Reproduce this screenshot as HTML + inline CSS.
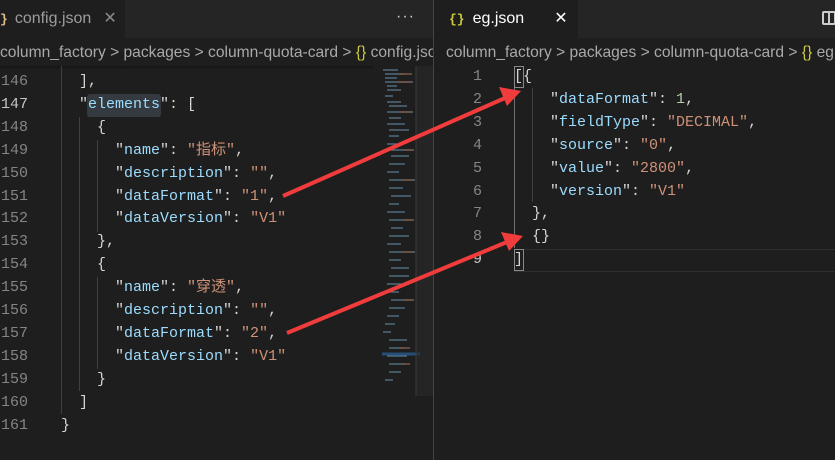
<!DOCTYPE html>
<html><head><meta charset="utf-8"><style>
*{margin:0;padding:0;box-sizing:border-box}
body{width:835px;height:460px;background:#1e1e1e;overflow:hidden;position:relative;font-family:"Liberation Sans",sans-serif}
.abs{position:absolute}
.mono{font-family:"Liberation Mono","Noto Sans CJK SC",monospace;font-size:15px;white-space:pre;line-height:22.9px}
.k{color:#9cdcfe}.s{color:#ce9178}.n{color:#b5cea8}.p{color:#d4d4d4}
.ln{color:#858585;text-align:right;width:40px}
.tab{font-size:16px;color:#fff;height:38px;line-height:38px}
.bc{font-size:15.6px;color:#a9a9a9;height:28px;line-height:28px;white-space:nowrap}
.y{color:#e2c08d;font-family:"Liberation Mono",monospace;font-weight:bold;font-size:13px}
</style></head><body>
<div class="abs" style="left:0;top:0;width:433px;height:38px;background:#252526"></div>
<div class="abs" style="left:0;top:0;width:125px;height:38px;background:#1e1e1e"></div>
<div class="abs tab" style="left:0;top:0;width:125px;"><span class="y">}</span><span style="margin-left:7px;color:#9d9d9d">config.json</span><span style="margin-left:12px;color:#8a8a8a;font-size:16px">✕</span></div>
<div class="abs" style="left:396px;top:8px;color:#ccc;font-size:16px;letter-spacing:1px">···</div>
<div class="abs" style="left:433px;top:0;width:1px;height:460px;background:#444"></div>
<div class="abs" style="left:434px;top:0;width:401px;height:38px;background:#252526"></div>
<div class="abs" style="left:434px;top:0;width:144px;height:38px;background:#1e1e1e"></div>
<div class="abs tab" style="left:449px;top:0"><span class="y" style="color:#cbcb41">{}</span><span style="margin-left:8px">eg.json</span><span style="margin-left:30px;font-size:16px">✕</span></div>
<div class="abs" style="left:822px;top:11px;width:14px;height:14px;border:2px solid #ccc;border-radius:2px"></div>
<div class="abs" style="left:828px;top:11px;width:2px;height:14px;background:#ccc"></div>
<div class="abs bc" style="left:0;top:39px;width:433px;overflow:hidden">column_factory &gt; packages &gt; column-quota-card &gt; <span style="color:#cbcb41">{}</span> config.json</div>
<div class="abs bc" style="left:446px;top:39px;width:389px;overflow:hidden">column_factory &gt; packages &gt; column-quota-card &gt; <span style="color:#cbcb41">{}</span> eg.json</div>
<div class="abs" style="left:0;top:66px;width:373px;height:4px;background:linear-gradient(#151515,#1e1e1e)"></div>
<div class="abs mono ln" style="left:-12px;top:71px">146
<span style="color:#c6c6c6">147</span>
148
149
150
151
152
153
154
155
156
157
158
159
160
161</div>
<div class="abs" style="left:61px;top:66px;width:1px;height:348px;background:#404040"></div>
<div class="abs" style="left:79px;top:117px;width:1px;height:274px;background:#404040"></div>
<div class="abs" style="left:97px;top:140px;width:1px;height:92px;background:#404040"></div>
<div class="abs" style="left:97px;top:277px;width:1px;height:92px;background:#404040"></div>
<div class="abs" style="left:87px;top:94px;width:74px;height:23px;background:#343a40;border-radius:3px"></div>
<div class="abs mono" style="left:61px;top:71px"><span class="p">  ],</span>
<span class="p">  "</span><span class="k">elements</span><span class="p">": [</span>
<span class="p">    {</span>
<span class="p">      "</span><span class="k">name</span><span class="p">": </span><span class="s">"指标"</span><span class="p">,</span>
<span class="p">      "</span><span class="k">description</span><span class="p">": </span><span class="s">""</span><span class="p">,</span>
<span class="p">      "</span><span class="k">dataFormat</span><span class="p">": </span><span class="s">"1"</span><span class="p">,</span>
<span class="p">      "</span><span class="k">dataVersion</span><span class="p">": </span><span class="s">"V1"</span>
<span class="p">    },</span>
<span class="p">    {</span>
<span class="p">      "</span><span class="k">name</span><span class="p">": </span><span class="s">"穿透"</span><span class="p">,</span>
<span class="p">      "</span><span class="k">description</span><span class="p">": </span><span class="s">""</span><span class="p">,</span>
<span class="p">      "</span><span class="k">dataFormat</span><span class="p">": </span><span class="s">"2"</span><span class="p">,</span>
<span class="p">      "</span><span class="k">dataVersion</span><span class="p">": </span><span class="s">"V1"</span>
<span class="p">    }</span>
<span class="p">  ]</span>
<span class="p">}</span></div>
<svg class="abs" style="left:380px;top:66px" width="53" height="330">
<g stroke-width="1.2">
<path d="M3 4h15M5 8h20M5 12h12M5 16h28M7 20h10M7 24h14M5 30h8M7 36h14M9 40h18M7 46h26M9 52h12M7 58h18M9 64h20M9 70h10M7 78h14M9 84h24M11 90h18M9 98h16M7 106h12M9 114h26M9 122h14M11 130h20M9 138h10M7 146h18M9 154h24M11 162h12M9 170h20M7 178h14M9 186h26M9 194h12M11 202h18M9 210h20M7 218h14M9 226h10M11 234h22M9 242h16M7 250h12M5 258h10M3 266h8M9 274h18M9 282h14M7 290h20M9 298h16M9 306h12M5 314h8" stroke="#5a7a8f"/>
<path d="M20 8h12M18 16h14M20 46h12M24 84h10M22 114h12M24 154h10M22 186h12M24 234h10M20 282h10M22 298h8" stroke="#8a6550"/>
<path d="M2 288h38" stroke="#264f78" stroke-width="3"/>
</g>
<rect x="36" y="0" width="17" height="330" fill="#2a2a2a" opacity="0.6"/>
<line x1="36" y1="0" x2="36" y2="330" stroke="#3a3a3a"/>
</svg>
<div class="abs mono ln" style="left:442px;top:66px">1
2
3
4
5
6
7
8
<span style="color:#c6c6c6">9</span></div>
<div class="abs" style="left:514px;top:88px;width:1px;height:160px;background:#707070"></div>
<div class="abs" style="left:532px;top:88px;width:1px;height:114px;background:#404040"></div>
<div class="abs" style="left:514px;top:249px;width:321px;height:23px;border-top:1px solid #2f2f2f;border-bottom:1px solid #2f2f2f"></div>
<div class="abs" style="left:514px;top:66px;width:10px;height:22px;border:1px solid #888"></div>
<div class="abs" style="left:514px;top:249px;width:10px;height:22px;border:1px solid #888"></div>
<div class="abs mono" style="left:514px;top:66px"><span class="p">[{</span>
<span class="p">    "</span><span class="k">dataFormat</span><span class="p">": </span><span class="n">1</span><span class="p">,</span>
<span class="p">    "</span><span class="k">fieldType</span><span class="p">": </span><span class="s">"DECIMAL"</span><span class="p">,</span>
<span class="p">    "</span><span class="k">source</span><span class="p">": </span><span class="s">"0"</span><span class="p">,</span>
<span class="p">    "</span><span class="k">value</span><span class="p">": </span><span class="s">"2800"</span><span class="p">,</span>
<span class="p">    "</span><span class="k">version</span><span class="p">": </span><span class="s">"V1"</span>
<span class="p">  },</span>
<span class="p">  {}</span>
<span class="p">]</span></div>
<svg class="abs" style="left:0;top:0" width="835" height="460">
<g fill="#f03c3c" stroke="#f03c3c">
<line x1="283" y1="196" x2="505" y2="98" stroke-width="4"/>
<polygon points="521,91 499,87 507,106" stroke="none"/>
<line x1="287" y1="333" x2="507" y2="242" stroke-width="4"/>
<polygon points="523,236 501,232 509,251" stroke="none"/>
</g>
</svg>
</body></html>
